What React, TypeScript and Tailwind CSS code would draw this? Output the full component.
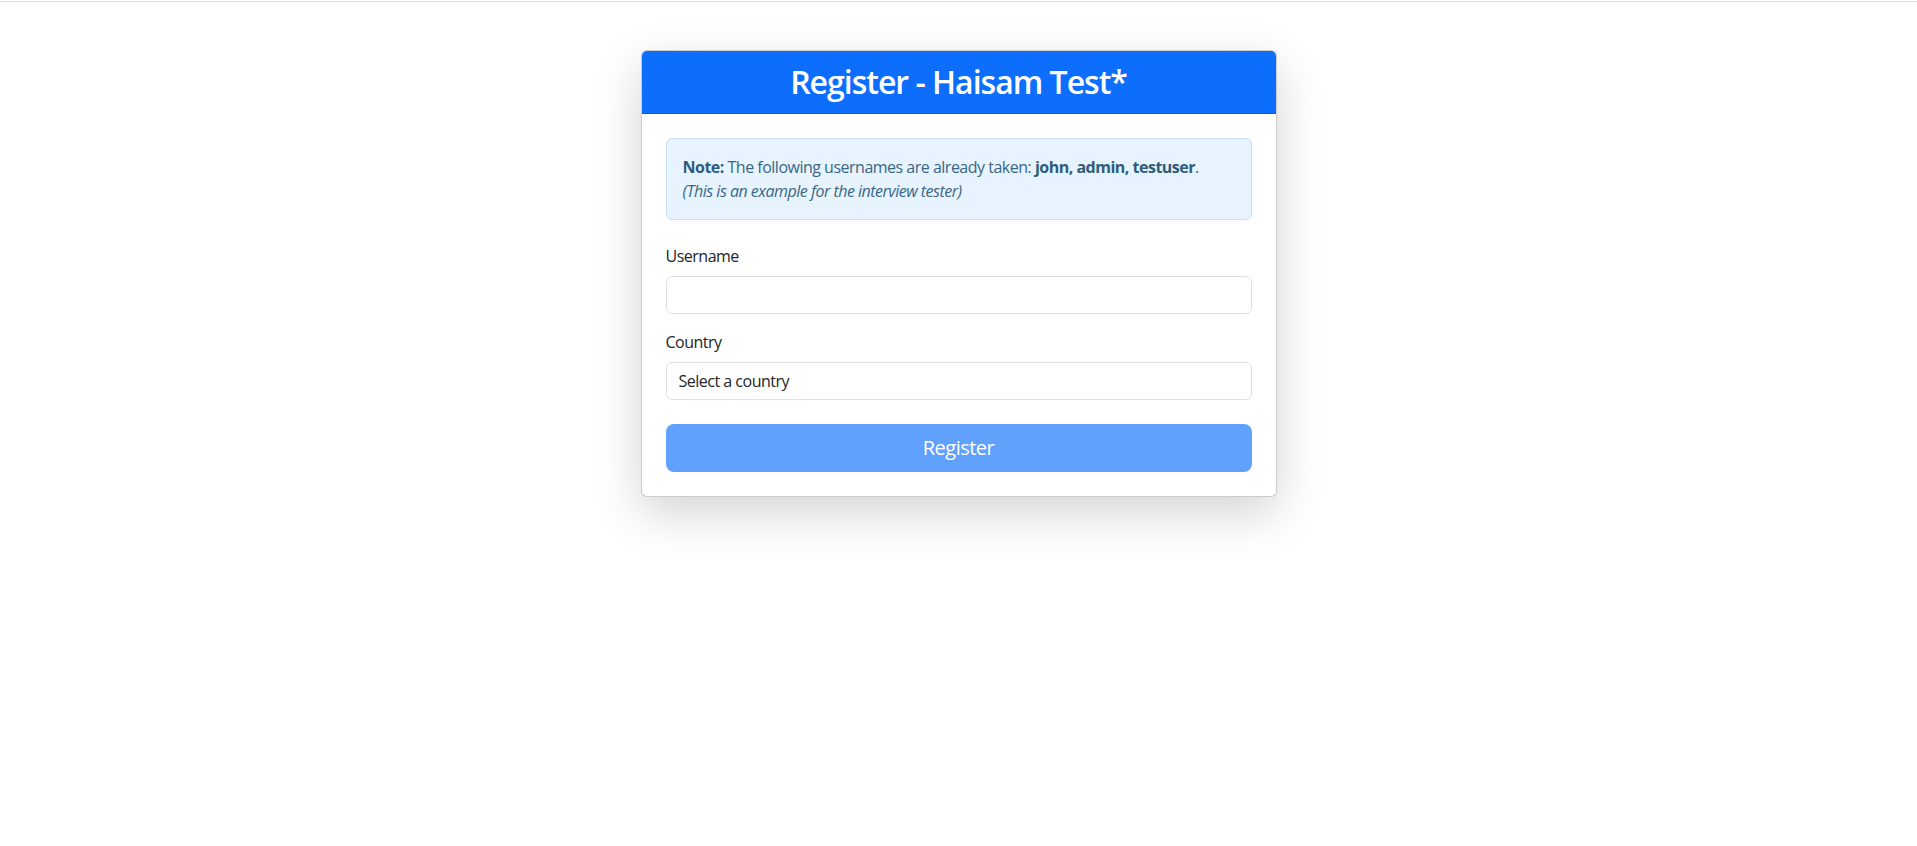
export default function App() {
  return (
    <div
      className="min-h-screen bg-white text-[#212529] tracking-[-0.5px]"
      style={{ fontFamily: '"Open Sans", "Noto Sans", sans-serif' }}
    >
      <div className="h-[2px] border-b border-[#dedede]" />
      <div className="w-[636px] mx-auto mt-[48px] rounded-md border border-black/20 bg-white shadow-[0_1rem_3rem_rgba(0,0,0,0.175)] overflow-hidden">
        <div className="bg-[#0d6efd] border-b border-[#0b5ed7] py-3 text-center">
          <h2 className="text-[32px] leading-[38px] font-semibold text-white tracking-[-1px]">Register - Haisam Test*</h2>
        </div>
        <div className="p-6">
          <div className="rounded-md border border-[#c8e0f2] bg-[#e7f3fe] p-4 text-base leading-6 text-[#3a6784] mb-6">
            <div>
              <strong className="font-bold text-[#2d5d7c]">Note:</strong> The following usernames are already taken:{" "}
              <strong className="font-bold text-[#2d5d7c]">john, admin, testuser</strong>.
            </div>
            <div className="italic">(This is an example for the interview tester)</div>
          </div>
          <div className="mb-4">
            <label className="block mb-2 text-base leading-6">Username</label>
            <input
              type="text"
              className="block w-full h-[38px] rounded-md border border-[#dee2e6] px-3 text-base outline-none"
            />
          </div>
          <div className="mb-6">
            <label className="block mb-2 text-base leading-6">Country</label>
            <div className="flex items-center w-full h-[38px] rounded-md border border-[#dee2e6] px-3 text-base">
              Select a country
            </div>
          </div>
          <button
            disabled
            className="block w-full h-12 rounded-lg bg-[#61a1fe] text-white text-xl tracking-[-0.5px]"
          >
            Register
          </button>
        </div>
      </div>
    </div>
  );
}
